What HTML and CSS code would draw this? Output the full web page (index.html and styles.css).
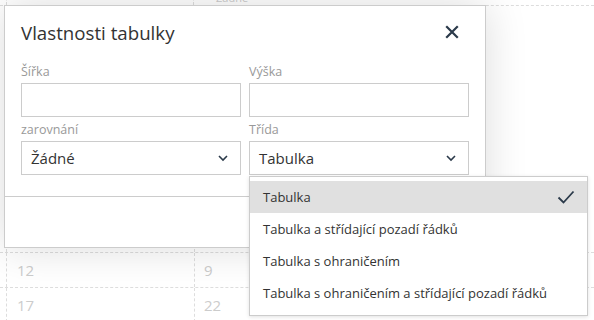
FILE: index.html
```html
<!DOCTYPE html>
<html lang="cs">
<head>
    <meta charset="UTF-8">
    <title>Vlastnosti tabulky</title>
    <link rel="stylesheet" href="styles.css">
</head>
<body>
    <div class="sheet">
        <div class="sheet-row top-row">
            <div class="cell"></div>
            <div class="cell">Žádné</div>
        </div>
        <div class="sheet-row gap-row">
            <div class="cell"></div>
            <div class="cell"></div>
        </div>
        <div class="sheet-row">
            <div class="cell">12</div>
            <div class="cell">9</div>
        </div>
        <div class="sheet-row">
            <div class="cell">17</div>
            <div class="cell">22</div>
        </div>
    </div>

    <div class="dialog">
        <div class="dialog-head">
            <div class="dialog-title">Vlastnosti tabulky</div>
            <button class="close-btn" title="Zavřít">
                <svg width="14" height="14" viewBox="0 0 14 14">
                    <path d="M2 2 L12 12 M12 2 L2 12" stroke="#2b3a4a" stroke-width="2.2" stroke-linecap="square"/>
                </svg>
            </button>
        </div>
        <div class="dialog-body">
            <div class="field">
                <label>Šířka</label>
                <div class="box"></div>
            </div>
            <div class="field">
                <label>Výška</label>
                <div class="box"></div>
            </div>
            <div class="field">
                <label>zarovnání</label>
                <div class="box select">
                    <span>Žádné</span>
                    <svg class="chevron" width="12" height="8" viewBox="0 0 12 8">
                        <path d="M2 2 L6 6 L10 2" fill="none" stroke="#2b3a4a" stroke-width="1.6"/>
                    </svg>
                </div>
            </div>
            <div class="field">
                <label>Třída</label>
                <div class="box select">
                    <span>Tabulka</span>
                    <svg class="chevron" width="12" height="8" viewBox="0 0 12 8">
                        <path d="M2 2 L6 6 L10 2" fill="none" stroke="#2b3a4a" stroke-width="1.6"/>
                    </svg>
                </div>
            </div>
        </div>
        <div class="dialog-foot"></div>
    </div>

    <div class="menu">
        <div class="menu-item active">
            <span>Tabulka</span>
            <svg width="18" height="14" viewBox="0 0 18 14">
                <path d="M1.5 7.5 L6.5 12.5 L16.5 1.5" fill="none" stroke="#2b3a4a" stroke-width="1.8"/>
            </svg>
        </div>
        <div class="menu-item"><span>Tabulka a střídající pozadí řádků</span></div>
        <div class="menu-item"><span>Tabulka s ohraničením</span></div>
        <div class="menu-item"><span>Tabulka s ohraničením a střídající pozadí řádků</span></div>
    </div>
</body>
</html>
```

FILE: styles.css
```css
body {
    margin: 0;
    background: #fff;
    font-family: 'Open Sans', 'Noto Sans', sans-serif;
    color: #333;
    overflow: hidden;
    width: 594px;
    height: 320px;
}
.sheet {
    margin-top: -16px;
}
.sheet-row {
    display: flex;
    height: 34px;
    border-top: 1px dashed #ddd;
    color: #ccc;
    font-size: 15px;
}
.sheet-row.top-row {
    height: 21px;
    border-top: none;
}
.sheet-row.gap-row {
    height: 246px;
}
.cell {
    display: flex;
    align-items: center;
    padding-left: 10px;
    border-left: 1px dashed #ddd;
}
.cell:first-child {
    margin-left: 6px;
    width: 177px;
}
.cell:last-child {
    width: 380px;
    padding-left: 9px;
}
.top-row .cell:last-child {
    padding-left: 22px;
    font-size: 11px;
    align-items: flex-end;
}
.dialog {
    position: absolute;
    left: 4px;
    top: 5px;
    width: 480px;
    height: 241px;
    background: #fff;
    border: 1px solid #ccc;
    box-shadow: 0 0 40px rgba(0, 0, 0, 0.14);
    display: flex;
    flex-direction: column;
}
.dialog-head {
    display: flex;
    justify-content: space-between;
    align-items: center;
    padding: 7px 26px 0 16px;
    height: 38px;
}
.dialog-title {
    font-size: 18.7px;
    color: #333;
}
.close-btn {
    background: none;
    border: none;
    padding: 0;
    width: 14px;
    height: 14px;
    display: flex;
}
.dialog-body {
    display: grid;
    grid-template-columns: 220px 220px;
    column-gap: 8px;
    padding: 12px 16px 0 16px;
}
.field label {
    display: block;
    font-size: 12.5px;
    color: #999;
    line-height: 18px;
    margin-bottom: 2px;
}
.box {
    box-sizing: border-box;
    height: 34px;
    border: 1px solid #ccc;
    margin-bottom: 4px;
}
.box.select {
    display: flex;
    align-items: center;
    justify-content: space-between;
    padding: 0 11px 0 9px;
    font-size: 15px;
    color: #333;
}
.dialog-foot {
    margin-top: auto;
    height: 50px;
    border-top: 1px solid #ccc;
}
.menu {
    position: absolute;
    left: 249px;
    top: 176px;
    width: 337px;
    height: 134px;
    background: #fff;
    border: 1px solid #ccc;
    box-shadow: 0 1px 4px rgba(0, 0, 0, 0.12);
    padding-top: 4px;
}
.menu-item {
    display: flex;
    align-items: center;
    justify-content: space-between;
    height: 32px;
    padding: 0 12px 0 13px;
    font-size: 13px;
    color: #333;
}
.menu-item.active {
    background: #e0e0e0;
}
```
